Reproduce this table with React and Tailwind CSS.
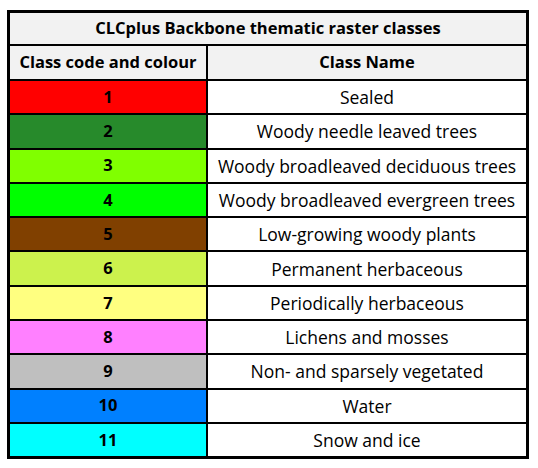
import React from 'react';

const classes = [
    { code: 1, name: 'Sealed', color: 'bg-[#ff0000]' },
    { code: 2, name: 'Woody needle leaved trees', color: 'bg-[#278a2b]' },
    { code: 3, name: 'Woody broadleaved deciduous trees', color: 'bg-[#80ff00]' },
    { code: 4, name: 'Woody broadleaved evergreen trees', color: 'bg-[#00ff00]' },
    { code: 5, name: 'Low-growing woody plants', color: 'bg-[#804000]' },
    { code: 6, name: 'Permanent herbaceous', color: 'bg-[#ccf24d]' },
    { code: 7, name: 'Periodically herbaceous', color: 'bg-[#ffff80]' },
    { code: 8, name: 'Lichens and mosses', color: 'bg-[#ff80ff]' },
    { code: 9, name: 'Non- and sparsely vegetated', color: 'bg-[#bfbfbf]' },
    { code: 10, name: 'Water', color: 'bg-[#0080ff]' },
    { code: 11, name: 'Snow and ice', color: 'bg-[#00ffff]' },
];

const App = () => {
    return (
        <div className="min-h-[468px] w-[538px] bg-white pl-[7px] pt-[10px] text-black" style={{ fontFamily: '"Open Sans", "Noto Sans", sans-serif' }}>
            <div className="w-[522px] border-[3px] border-black">
                {/* title */}
                <div className="flex h-[31px] items-center justify-center bg-[#f2f2f2] text-[16.5px] font-bold">
                    CLCplus Backbone thematic raster classes
                </div>
                {/* header */}
                <div className="grid grid-cols-[198px_1fr] border-t-2 border-black bg-[#f2f2f2] text-[16.5px] font-bold">
                    <div className="flex h-[33px] items-center justify-center border-r-2 border-black">Class code and colour</div>
                    <div className="flex h-[33px] items-center justify-center">Class Name</div>
                </div>
                {classes.map((c) => (
                    <div key={c.code} className="grid grid-cols-[198px_1fr] border-t-2 border-black">
                        <div className={`flex h-[32.3px] items-center justify-center border-r-2 border-black text-[16.5px] font-bold ${c.color}`}>
                            {c.code}
                        </div>
                        <div className="flex h-[32.3px] items-center justify-center bg-white text-[17.5px]">{c.name}</div>
                    </div>
                ))}
            </div>
        </div>
    );
};

export default App;
